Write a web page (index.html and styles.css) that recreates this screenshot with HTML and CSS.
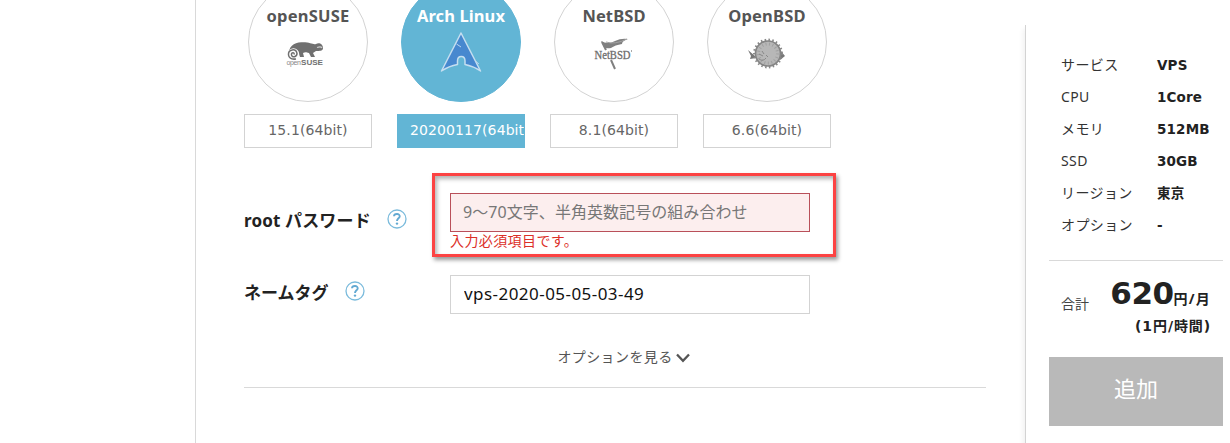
FILE: index.html
```html
<!DOCTYPE html>
<html lang="ja">
<head>
<meta charset="utf-8">
<title>VPS</title>
<link rel="stylesheet" href="styles.css">
</head>
<body>
<div class="page">
  <main class="main">
    <div class="os-list">
      <div class="os">
        <div class="os-circle">
          <div class="os-name">openSUSE</div>
          <svg class="logo" width="60" height="45" viewBox="0 0 60 45">
            <path d="M11 25C10 17 16 12 24 12.300C32 12 35 15 38 14C41 12 45 14 45 18C45 21 42 21 38 21L35 23L37 27H33L31 23C28 22 27 22 25 23L26 27H22L21 24C18 27 13 28 11 25Z" fill="#707070"/>
            <circle cx="15.500" cy="24" r="5.700" fill="#fff"/>
            <path d="M16 24.500C17 22 13 22 13.500 25C14 28 19 27 19 23.500C18 18 10 19 10.500 25C11 28 14 29.500 18 29" fill="none" stroke="#707070" stroke-width="1.500"/>
            <path d="M39 17.500Q43 16 44 18" fill="none" stroke="#ccc" stroke-width="1.200"/>
            <text x="8.500" y="34.500" class="suse-open" textLength="14.500">open</text>
            <text x="23" y="34.700" class="suse-bold" textLength="22" lengthAdjust="spacingAndGlyphs">SUSE</text>
          </svg>
        </div>
        <div class="version">15.1(64bit)</div>
      </div>
      <div class="os selected">
        <div class="os-circle">
          <div class="os-name arch">Arch Linux</div>
          <svg class="logo" width="60" height="45" viewBox="0 0 60 45">
            <path d="M30 3L10.500 41Q18 36 26.500 34.500V31C26.500 25 34 25 34 31V34.500Q42 36 49.500 41Z" fill="#4788cf" stroke="#c5def0" stroke-width="1.500" stroke-linejoin="round"/>
            <path d="M25.500 14L30 17M44.500 31L48 34" stroke="#b9d5ef" stroke-width="1"/>
          </svg>
        </div>
        <div class="version">20200117(64bit)</div>
      </div>
      <div class="os">
        <div class="os-circle">
          <div class="os-name bsd">NetBSD</div>
          <svg class="logo" width="60" height="45" viewBox="0 0 60 45">
            <path d="M17 11Q24 15 31 11Q37 8 44 9Q38 11 38 14Q31 15 27 18Q22 19 20 17Z" fill="#808080"/>
            <path d="M18 12L22 20M27 30L31 39" stroke="#808080" stroke-width="2"/>
            <path d="M22 12Q31 15 43 9" fill="none" stroke="#a3a3a3" stroke-width="1"/>
            <text x="10.500" y="29" class="net-logo" textLength="36" lengthAdjust="spacingAndGlyphs">NetBSD</text>
            <path d="M47.500 20V22" stroke="#aaa"/>
          </svg>
        </div>
        <div class="version">8.1(64bit)</div>
      </div>
      <div class="os">
        <div class="os-circle">
          <div class="os-name">OpenBSD</div>
          <svg class="logo" width="60" height="45" viewBox="0 0 60 45">
            <path d="M18 26L11 20L14 26L13 29L19 28ZM43 20L48 26L43 30Z" fill="#777"/>
            <circle cx="31" cy="23.500" r="13.700" fill="none" stroke="#888" stroke-width="2.500" stroke-dasharray="1.500 2.300"/>
            <circle cx="31" cy="23.500" r="12.500" fill="#b7b7b7" stroke="#858585" stroke-width="1.700"/>
            <circle cx="31" cy="23.500" r="9.500" fill="none" stroke="#a0a0a0" stroke-width="3" stroke-dasharray="1 2.500"/>
            <path d="M22 24l4 2M25 21l2 3M22 29q4 3 7-1M29 25l2 2" fill="none" stroke="#888"/>
          </svg>
        </div>
        <div class="version">6.6(64bit)</div>
      </div>
    </div>

    <div class="row password-row">
      <div class="label">
        <span class="label-text">root パスワード</span>
        <svg class="help" width="20" height="20" viewBox="0 0 20 20"><circle cx="10" cy="10" r="9" class="help-ring"/><path class="help-mark" d="M7 7.200C7.200 4.200 13 4.200 12.700 7.500C12.500 9.300 10 9.500 10 12"/><circle cx="10" cy="14.600" r="1.200" class="help-dot"/></svg>
      </div>
      <div class="field">
        <input class="input error" type="text" placeholder="9～70文字、半角英数記号の組み合わせ">
        <div class="message">入力必須項目です。</div>
        <div class="highlight"></div>
      </div>
    </div>

    <div class="row name-row">
      <div class="label">
        <span class="label-text">ネームタグ</span>
        <svg class="help" width="20" height="20" viewBox="0 0 20 20"><circle cx="10" cy="10" r="9" class="help-ring"/><path class="help-mark" d="M7 7.200C7.200 4.200 13 4.200 12.700 7.500C12.500 9.300 10 9.500 10 12"/><circle cx="10" cy="14.600" r="1.200" class="help-dot"/></svg>
      </div>
      <div class="field">
        <input class="input tag" type="text" value="vps-2020-05-05-03-49">
      </div>
    </div>

    <div class="more"><span>オプションを見る</span><svg width="14" height="10" viewBox="0 0 14 10"><path d="M1 1.500L7 7.800L13 1.500" fill="none" stroke="#555" stroke-width="2.300"/></svg></div>
  </main>

  <aside class="side">
    <dl class="specs">
      <dt>サービス</dt><dd>VPS</dd>
      <dt>CPU</dt><dd>1Core</dd>
      <dt>メモリ</dt><dd>512MB</dd>
      <dt>SSD</dt><dd>30GB</dd>
      <dt>リージョン</dt><dd>東京</dd>
      <dt>オプション</dt><dd>-</dd>
    </dl>
    <div class="total">
      <span class="total-label">合計</span>
      <span class="price"><b>620</b><span>円/月</span></span>
    </div>
    <div class="hourly">(1円/時間)</div>
    <button class="add">追加</button>
  </aside>
</div>
</body>
</html>
```
FILE: styles.css
```css
* { box-sizing: border-box; }
body {
  margin: 0;
  background: #fff;
  color: #222;
  font-family: "Noto Sans", "Noto Sans CJK JP", sans-serif;
}
.page {
  display: flex;
  height: 443px;
  padding-left: 195px;
  overflow: hidden;
}
.main {
  width: 830px;
  border-left: 1px solid #d9d9d9;
  padding-left: 48px;
}
.os-list {
  display: flex;
  gap: 25px;
  margin-top: -18px;
}
.os { width: 128px; }
.os-circle {
  width: 120px;
  height: 120px;
  margin: 0 auto 12px;
  border: 1px solid #d3d3d3;
  border-radius: 50%;
  padding-top: 21px;
  text-align: center;
}
.os-name {
  height: 24px;
  line-height: 24px;
  font-size: 16.500px;
  font-weight: 700;
  letter-spacing: .2px;
  white-space: nowrap;
  color: #555;
}
.arch { letter-spacing: .1px; }
.bsd { letter-spacing: .1px; }
.logo { display: block; margin: 2px auto 0; }
.suse-open { font: 7px "Liberation Sans", sans-serif; fill: #888; }
.suse-bold { font: bold 7.500px "Liberation Sans", sans-serif; fill: #707070; }
.net-logo { font: 11.500px "Liberation Serif", serif; fill: #666; stroke: #777; stroke-width: .3px; }
.version {
  height: 34px;
  border: 1px solid #d3d3d3;
  line-height: 31px;
  font-family: "DejaVu Sans", sans-serif;
  font-size: 14px;
  letter-spacing: .1px;
  text-align: center;
  color: #666;
  overflow: hidden;
  white-space: nowrap;
}
.selected .os-circle, .selected .version {
  background: #62b5d5;
  border-color: #62b5d5;
}
.selected .os-name, .selected .version { color: #fff; }
.selected .version { text-align: left; padding-left: 12px; }
.row { display: flex; }
.password-row { margin-top: 45px; height: 82px; }
.label {
  display: flex;
  width: 206px;
  height: 54px;
  align-items: center;
  font-size: 17px;
  font-weight: 700;
  white-space: nowrap;
}
.label-text { margin-top: -2px; }
.password-row .label-text { width: 127px; letter-spacing: .15px; }
.name-row .label-text { width: 85px; }
.name-row .label { height: 34px; }
.help { margin: -2px 0 0 16px; }
.help-ring { fill: none; stroke: #7bbbdc; stroke-width: 1.300; }
.help-mark { fill: none; stroke: #62a9d2; stroke-width: 1.900; }
.help-dot { fill: #62a9d2; }
.field { position: relative; width: 360px; }
.input {
  display: block;
  width: 360px;
  height: 39px;
  padding: 0 12px 2px;
  border: 1px solid #d3d3d3;
  outline: 0;
  background: #fff;
  color: #111;
  font-family: inherit;
  font-size: 16px;
}
.tag { padding: 0 13px 2px; font-size: 17px; letter-spacing: .45px; }
.error { border-color: #b9505a; background: #fceeee; }
.input::placeholder { color: #777; opacity: 1; letter-spacing: .06px; }
.message {
  height: 18px;
  line-height: 18px;
  font-size: 14px;
  letter-spacing: .4px;
  color: #dc3028;
}
.highlight {
  position: absolute;
  left: -18px;
  top: -20px;
  width: 404px;
  height: 84px;
  border: 3px solid #fc4343;
  box-shadow: 2px 3px 4px rgba(0,0,0,.4), inset 2px 3px 4px rgba(0,0,0,.3);
  pointer-events: none;
}
.more {
  display: flex;
  width: 742px;
  height: 74px;
  padding: 29px 0 0 17px;
  justify-content: center;
  gap: 3px;
  border-bottom: 1px solid #d9d9d9;
  font-size: 14px;
  letter-spacing: .4px;
  line-height: 28px;
  color: #555;
}
.more svg { margin-top: 10px; }
.side {
  width: 198px;
  height: 440px;
  margin-top: 25px;
  padding: 24px 0 0 23px;
  border-left: 1px solid #d3d3d3;
  box-shadow: -6px 0 5px -4px rgba(0,0,0,.06);
}
.specs {
  display: grid;
  grid-template-columns: 96px 1fr;
  grid-auto-rows: 32px;
  height: 212px;
  margin: 0;
  padding-left: 12px;
  border-bottom: 1px solid #d9d9d9;
  font-size: 14px;
  line-height: 32px;
}
.specs dt { color: #333; letter-spacing: .4px; }
.specs dd {
  margin: 0;
  font-family: "DejaVu Sans", "Noto Sans CJK JP", sans-serif;
  font-size: 13.500px;
  letter-spacing: .15px;
  font-weight: 700;
}
.total {
  display: flex;
  justify-content: space-between;
  height: 52px;
  padding: 10px 12px 0 12px;
  line-height: 44px;
  white-space: nowrap;
}
.total-label { padding-top: 11px; font-size: 14px; color: #444; }
.price { font-size: 14px; font-weight: 700; letter-spacing: 1.200px; }
.price b { font: 700 31px/44px "DejaVu Sans", sans-serif; letter-spacing: -.5px; }
.hourly {
  height: 44px;
  padding-right: 12px;
  line-height: 26px;
  font-family: "DejaVu Sans", "Noto Sans CJK JP", sans-serif;
  font-size: 14px;
  font-weight: 700;
  text-align: right;
  letter-spacing: .9px;
}
.add {
  display: block;
  width: 174px;
  height: 69px;
  border: 0;
  padding: 0 0 9px;
  background: #b9b9b9;
  color: #fff;
  font: 22px "Noto Sans CJK JP", sans-serif;
}
```
